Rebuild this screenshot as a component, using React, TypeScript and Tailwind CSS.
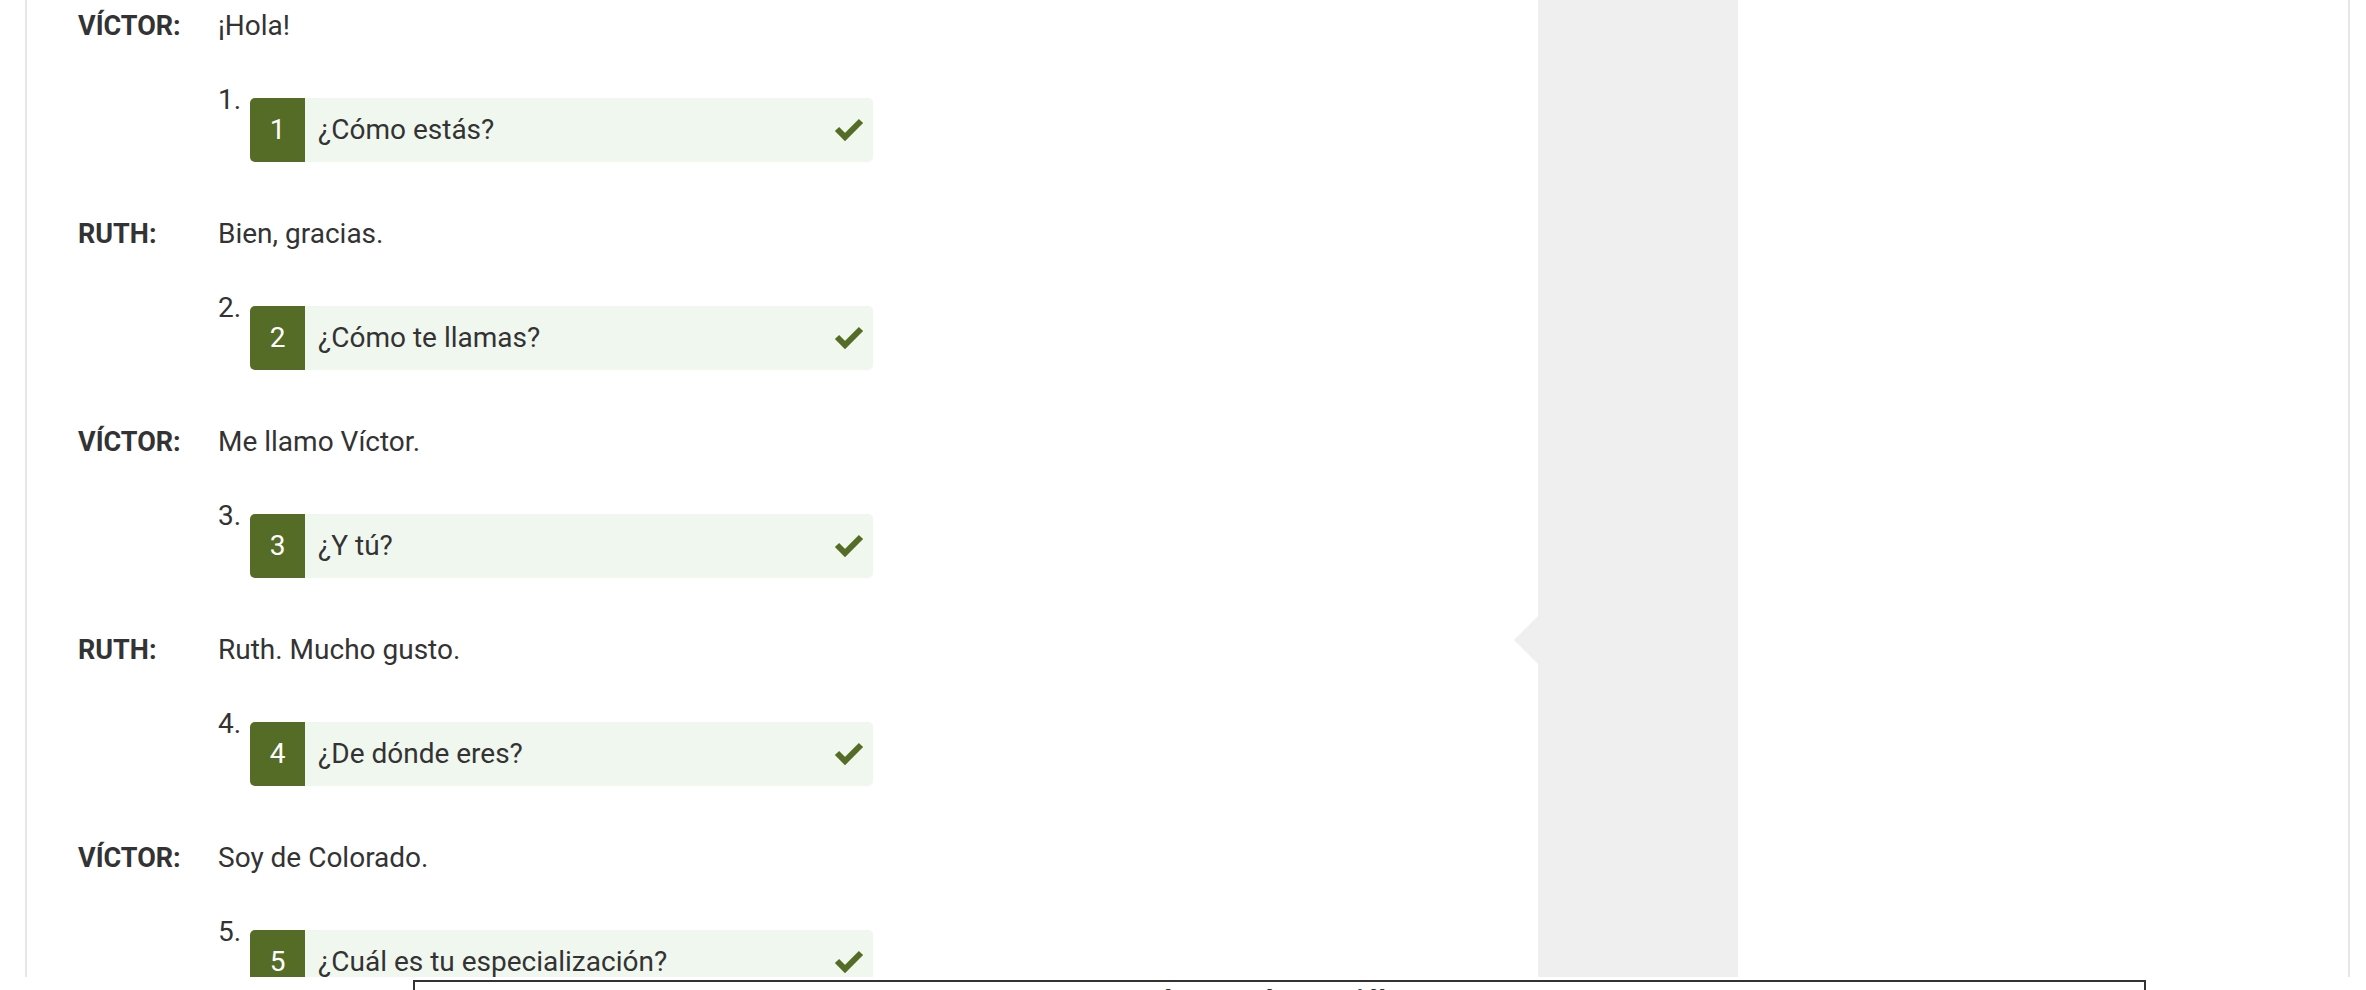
// Dialogue practice page: speaker lines with answered (correct) question boxes.

const dialogue = [
  { speaker: "VÍCTOR:", line: "¡Hola!", n: 1, answer: "¿Cómo estás?" },
  { speaker: "RUTH:", line: "Bien, gracias.", n: 2, answer: "¿Cómo te llamas?" },
  { speaker: "VÍCTOR:", line: "Me llamo Víctor.", n: 3, answer: "¿Y tú?" },
  { speaker: "RUTH:", line: "Ruth. Mucho gusto.", n: 4, answer: "¿De dónde eres?" },
  { speaker: "VÍCTOR:", line: "Soy de Colorado.", n: 5, answer: "¿Cuál es tu especialización?" },
];

function Check() {
  return (
    <svg width="30" height="24" viewBox="0 0 30 24" className="shrink-0">
      <polyline
        points="3,11 11,19 27,3"
        fill="none"
        stroke="#546c26"
        strokeWidth="6"
        strokeLinecap="butt"
        strokeLinejoin="miter"
      />
    </svg>
  );
}

function AnswerBox({ n, text }: { n: number; text: string }) {
  return (
    <div className="mt-[18px] ml-[10px] flex h-[64px] w-[623px] items-center rounded-[5px] bg-[#f0f7ee]">
      <div className="flex h-full w-[55px] items-center justify-center rounded-l-[5px] bg-[#546c26] text-white">
        {n}
      </div>
      <div className="flex-1 pl-[13px]">{text}</div>
      <div className="pr-[9px]">
        <Check />
      </div>
    </div>
  );
}

export default function App() {
  return (
    <div className="relative h-[990px] w-[2366px] overflow-hidden bg-white font-['Roboto',sans-serif] text-[28px] leading-[40px] text-[#333]">
      <div className="ml-[25px] flex h-[990px] w-[2325px] border-x-2 border-[#e6e6e6]">
        {/* dialogue column */}
        <div className="w-[1511px] pl-[51px] pt-[6px]">
          {dialogue.map((d, i) => (
            <div key={i} className={i === 0 ? "" : "mt-[52px]"}>
              <div className="flex h-[40px]">
                <span className="w-[140px] text-[27px] font-bold">{d.speaker}</span>
                <span>{d.line}</span>
              </div>
              <div className="mt-[34px] flex items-start pl-[140px]">
                <span className="w-[22px]">{d.n}.</span>
                <AnswerBox n={d.n} text={d.answer} />
              </div>
            </div>
          ))}
        </div>

        {/* gray side column with pointer */}
        <div className="relative w-[200px] bg-[#efefef]">
          <span className="absolute left-[-24px] top-[616px] h-0 w-0 border-y-[24px] border-r-[24px] border-y-transparent border-r-[#efefef]" />
        </div>

        <div className="flex-1" />
      </div>

      {/* bottom panel peeking in */}
      <div className="absolute left-0 top-[977px] h-[20px] w-full bg-white">
        <div className="absolute left-[413px] top-[3px] h-[40px] w-[1733px] border-2 border-[#333] bg-white pt-[5px] text-center font-bold leading-[27px]">
          ¿Cómo estás? — Diálogo
        </div>
      </div>
    </div>
  );
}
